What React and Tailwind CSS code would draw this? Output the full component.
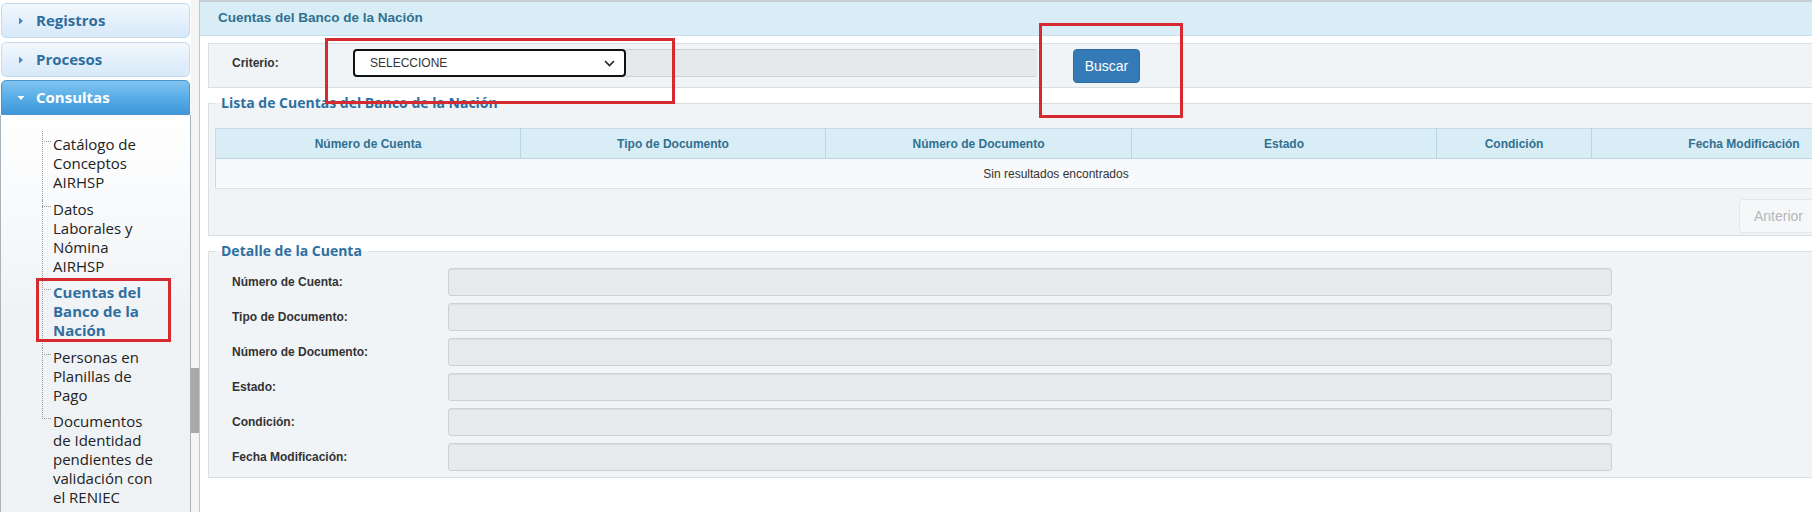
import React from "react";

const items = [
  { lines: "Catálogo de Conceptos AIRHSP" },
  { lines: "Datos Laborales y Nómina AIRHSP" },
  { lines: "Cuentas del Banco de la Nación", active: true },
  { lines: "Personas en Planillas de Pago" },
  { lines: "Documentos de Identidad pendientes de validación con el RENIEC", last: true },
];

const openSans = { fontFamily: '"Open Sans", "DejaVu Sans", sans-serif' };

function AccHeader({ label, active }) {
  return (
    <div
      className={
        active
          ? "mx-[1px] h-[35px] flex items-center rounded-t-[5px] border border-[#4b95cc] bg-gradient-to-b from-[#80c4f0] via-[#58ade6] to-[#3e97da]"
          : "mx-[1px] h-[35px] flex items-center rounded-[5px] border border-[#c5dbec] bg-gradient-to-b from-[#f2f8fd] via-[#e4f0fb] to-[#d7e9f8]"
      }
    >
      <span className="w-[34px] flex justify-center pl-[4px]">
        {active ? (
          <svg width="8" height="6" viewBox="0 0 8 6">
            <path d="M0.5 1 L7.5 1 L4 5 Z" fill="#ffffff" />
          </svg>
        ) : (
          <svg width="6" height="8" viewBox="0 0 6 8">
            <path d="M1 0.5 L5 4 L1 7.5 Z" fill="#4a86bd" />
          </svg>
        )}
      </span>
      <span
        className={
          "text-[15px] font-bold leading-none " +
          (active ? "text-white" : "text-[#2e6e9e]")
        }
      >
        {label}
      </span>
    </div>
  );
}

function Sidebar() {
  return (
    <div className="w-[191px] h-[512px] flex flex-col pt-[3px]" style={openSans}>
      <AccHeader label="Registros" />
      <div className="h-[4px]" />
      <AccHeader label="Procesos" />
      <div className="h-[3px]" />
      <AccHeader label="Consultas" active />
      <div className="flex-1 border-l border-r border-[#a9b3bb] bg-gradient-to-b from-[#ffffff] via-[#f0f3f6] to-[#eef2f5] pt-[20px] pl-[41px]">
        <div className="flex flex-col gap-[7.5px]">
          {items.map((it, i) => (
            <div key={i} className="relative pl-[11px]">
              <span
                className={
                  "absolute left-0 border-l border-dotted border-[#9a9a9a] " +
                  (it.last ? "top-0 h-[7px]" : i === 0 ? "-top-[4px] -bottom-[8px]" : "top-0 -bottom-[8px]")
                }
              />
              <span className="absolute left-0 top-[6px] w-[9px] border-t border-dotted border-[#9a9a9a]" />
              <div
                className={
                  "w-[106px] text-[15px] leading-[19px] " +
                  (it.active ? "font-bold text-[#2f6f9f]" : "text-[#222222]")
                }
              >
                {it.lines}
              </div>
            </div>
          ))}
        </div>
      </div>
    </div>
  );
}

function Scrollbar() {
  return (
    <div className="w-[8px] h-[512px] flex flex-col bg-[#f4f4f4]">
      <div className="h-[368px]" />
      <div className="h-[65px] w-[8px] bg-[#a8a8a8]" />
    </div>
  );
}

const cols = [
  "Número de Cuenta",
  "Tipo de Documento",
  "Número de Documento",
  "Estado",
  "Condición",
  "Fecha Modificación",
];
const colW = [305, 305, 306, 305, 155, 305];

const detailRows = [
  "Número de Cuenta:",
  "Tipo de Documento:",
  "Número de Documento:",
  "Estado:",
  "Condición:",
  "Fecha Modificación:",
];

function Main() {
  return (
    <div
      className="flex-1 h-[512px] border-l border-[#c2c6ca] overflow-hidden bg-white"
      style={{ fontFamily: '"Liberation Sans", Arial, sans-serif' }}
    >
      <div className="w-[1720px]">
        <div className="h-[2px] bg-[#c3cdd3]" />
        <div className="h-[34px] bg-[#d9edf7] border-b border-[#c6e1ef] flex items-center pl-[18px]">
          <span className="text-[13.5px] font-bold text-[#31708f]">Cuentas del Banco de la Nación</span>
        </div>

        <div className="ml-[8px] mt-[7px] h-[45px] border border-[#dadee1] bg-[#f1f4f7] flex items-start pt-[5px]">
          <div className="w-[144px] pl-[23px] h-[28px] flex items-center text-[12px] font-bold text-[#333333]">
            Criterio:
          </div>
          <div className="flex">
            <div className="w-[273px] h-[28px] rounded-[4px] border-2 border-[#111111] bg-white flex items-center pl-[15px] pr-[9px] justify-between">
              <span className="text-[12px] text-[#333333]">SELECCIONE</span>
              <svg width="11" height="7" viewBox="0 0 11 7">
                <path d="M1 1 L5.5 5.5 L10 1" fill="none" stroke="#222" strokeWidth="1.6" />
              </svg>
            </div>
            <div className="w-[411px] h-[28px] bg-[#e6e9ec] border-t border-b border-[#ccd0d3] rounded-r-[3px]" />
          </div>
          <button className="ml-[36px] w-[67px] h-[34px] rounded-[4px] bg-[#337ab7] border border-[#2e6da4] text-white text-[14px]">
            Buscar
          </button>
        </div>

        <fieldset className="ml-[8px] mt-[7px] border border-[#dadee1] bg-[#f1f4f7] px-[6px] pt-[17px] pb-[2px]">
          <legend className="px-[6px] text-[14px] font-bold text-[#2f6f9f] leading-[16px]" style={openSans}>
            Lista de Cuentas del Banco de la Nación
          </legend>
          <table className="border-collapse table-fixed w-[1681px] border border-[#c5dbe7]">
            <thead>
              <tr className="h-[30px] bg-[#d9edf7]">
                {cols.map((c, i) => (
                  <th
                    key={i}
                    style={{ width: colW[i] }}
                    className="border-r border-b border-[#bcd5e3] text-[12px] font-bold text-[#31708f] text-center"
                  >
                    {c}
                  </th>
                ))}
              </tr>
            </thead>
            <tbody>
              <tr className="h-[30px] bg-[#f8f9fa]">
                <td colSpan={6} className="text-center text-[12px] text-[#333333] border-b border-[#dde1e4]">
                  Sin resultados encontrados
                </td>
              </tr>
            </tbody>
          </table>
          <div className="flex mt-[10px] pl-[1524px]">
            <div className="h-[34px] w-[157px] rounded-l-[4px] border border-[#e3e7ea] bg-[#f5f7f9] flex items-center pl-[14px] text-[14px] text-[#b3b7bb]">
              Anterior
            </div>
          </div>
        </fieldset>

        <fieldset className="ml-[8px] mt-[7px] border border-[#dadee1] bg-[#f1f4f7] px-[6px] pt-[9px] pb-[6px]">
          <legend className="px-[6px] text-[14px] font-bold text-[#2f6f9f] leading-[16px]" style={openSans}>
            Detalle de la Cuenta
          </legend>
          <div className="flex flex-col gap-[7px]">
            {detailRows.map((r, i) => (
              <div key={i} className="flex items-center h-[28px]">
                <div className="w-[233px] pl-[17px] text-[12px] font-bold text-[#333333]">{r}</div>
                <div className="w-[1164px] h-[28px] rounded-[3px] border border-[#cdd1d4] bg-[#e7eaed] shadow-[inset_0_1px_1px_rgba(0,0,0,0.06)]" />
              </div>
            ))}
          </div>
        </fieldset>
      </div>
    </div>
  );
}

export default function App() {
  return (
    <div className="relative w-[1812px] h-[512px] overflow-hidden bg-white flex">
      <Sidebar />
      <Scrollbar />
      <Main />
      <div className="absolute left-[325px] top-[38px] w-[350px] h-[66px] border-[3px] border-[#d42a30]" />
      <div className="absolute left-[1039px] top-[23px] w-[144px] h-[95px] border-[3px] border-[#d42a30]" />
      <div className="absolute left-[36px] top-[278px] w-[135px] h-[64px] border-[3px] border-[#d42a30]" />
    </div>
  );
}
